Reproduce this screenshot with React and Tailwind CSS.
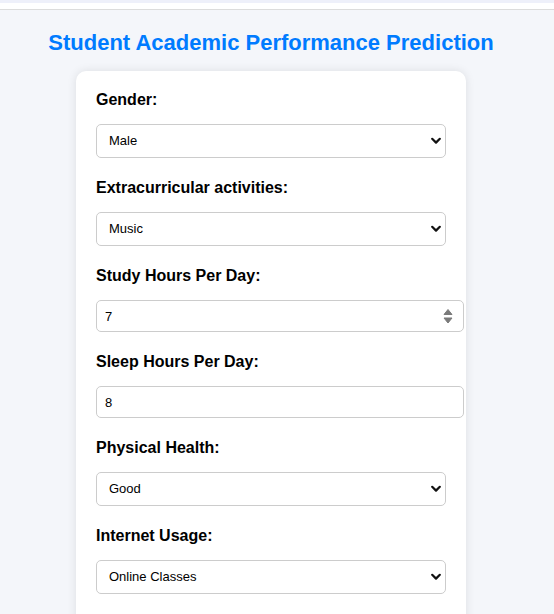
import React from "react";

const font = { fontFamily: '"Liberation Sans", Arial, sans-serif' };

function SelectField({ label, value, options }) {
  return (
    <div className="flex flex-col">
      <label className="block text-[16px] leading-[18px] font-bold text-black mb-[15px]">{label}</label>
      <div className="relative w-[350px] h-[34px] mb-[21px]">
        <select
          defaultValue={value}
          className="appearance-none w-full h-full border border-[#cccccc] rounded-[5px] bg-white pl-[12px] pr-[30px] text-[13px] text-black outline-none"
          style={font}
        >
          {options.map((o) => (
            <option key={o}>{o}</option>
          ))}
        </select>
        <svg className="absolute right-[5px] top-[13px] pointer-events-none" width="10" height="8" viewBox="0 0 10 8">
          <path d="M1.2 1.8 L5 5.6 L8.8 1.8" fill="none" stroke="#111" strokeWidth="2.2" strokeLinecap="round" strokeLinejoin="round" />
        </svg>
      </div>
    </div>
  );
}

function InputField({ label, value, spinner }) {
  return (
    <div className="flex flex-col">
      <label className="block text-[16px] leading-[18px] font-bold text-black mb-[15px]">{label}</label>
      <div className="relative w-[368px] h-[32px] mb-[21px]">
        <input
          type="text"
          defaultValue={value}
          className="w-full h-full border border-[#cccccc] rounded-[5px] bg-white px-[8px] text-[13px] text-black outline-none"
          style={font}
        />
        {spinner && (
          <svg className="absolute right-[11px] top-[8px] pointer-events-none" width="10" height="17" viewBox="0 0 10 17">
            <path d="M5 1.5 L9 6.5 L1 6.5 Z" fill="#7a7a7a" stroke="#7a7a7a" strokeWidth="1" strokeLinejoin="round" />
            <path d="M1 10 L9 10 L5 15 Z" fill="#7a7a7a" stroke="#7a7a7a" strokeWidth="1" strokeLinejoin="round" />
          </svg>
        )}
      </div>
    </div>
  );
}

export default function App() {
  return (
    <div className="min-h-[614px] bg-[#f4f6fa]" style={font}>
      <div className="h-[3px] bg-[#eef0fa]" />
      <div className="h-[6px] bg-white" />
      <div className="h-[1px] bg-[#dcdcdc]" />
      <div className="pr-[12px] flex flex-col items-center">
        <h1 className="mt-[20px] text-[22px] leading-[25px] font-bold text-[#007bff] text-center">
          Student Academic Performance Prediction
        </h1>
        <div className="mt-[16px] w-[390px] bg-white rounded-[10px] shadow-[0_0_10px_rgba(0,0,0,0.1)] p-[20px] overflow-visible">
          <SelectField label="Gender:" value="Male" options={["Male", "Female"]} />
          <SelectField label="Extracurricular activities:" value="Music" options={["Music", "Sports", "None"]} />
          <InputField label="Study Hours Per Day:" value="7" spinner />
          <InputField label="Sleep Hours Per Day:" value="8" />
          <SelectField label="Physical Health:" value="Good" options={["Good", "Average", "Poor"]} />
          <SelectField label="Internet Usage:" value="Online Classes" options={["Online Classes", "Social Media", "Gaming"]} />
        </div>
      </div>
    </div>
  );
}
